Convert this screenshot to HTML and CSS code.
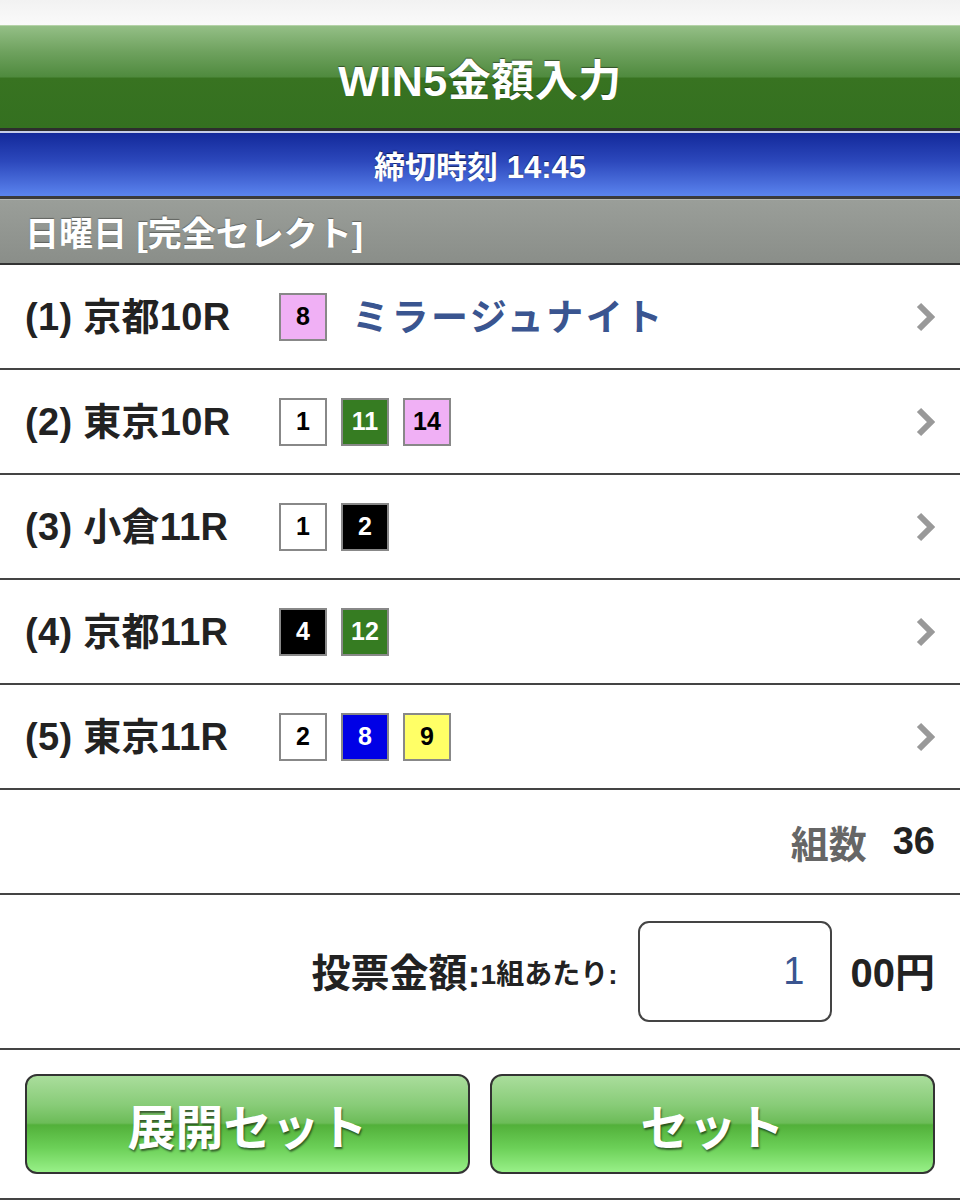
FILE: index.html
```html
<!DOCTYPE html>
<html lang="ja">
<head>
<meta charset="utf-8">
<title>WIN5金額入力</title>
<link rel="stylesheet" href="styles.css">
</head>
<body>
<div class="page">
  <div class="status"></div>
  <header class="title-bar"><h1>WIN5金額入力</h1></header>
  <div class="deadline">締切時刻 14:45</div>
  <div class="section-head">日曜日 [完全セレクト]</div>

  <div class="race">
    <div class="race-label">(1) 京都10R</div>
    <div class="picks">
      <span class="num pink">8</span>
      <span class="horse">ミラージュナイト</span>
    </div>
    <svg class="chev" viewBox="0 0 20 30"><path d="M4 3 L16 15 L4 27" fill="none" stroke="#999" stroke-width="6"/></svg>
  </div>
  <div class="race">
    <div class="race-label">(2) 東京10R</div>
    <div class="picks">
      <span class="num white">1</span>
      <span class="num green">11</span>
      <span class="num pink">14</span>
    </div>
    <svg class="chev" viewBox="0 0 20 30"><path d="M4 3 L16 15 L4 27" fill="none" stroke="#999" stroke-width="6"/></svg>
  </div>
  <div class="race">
    <div class="race-label">(3) 小倉11R</div>
    <div class="picks">
      <span class="num white">1</span>
      <span class="num black">2</span>
    </div>
    <svg class="chev" viewBox="0 0 20 30"><path d="M4 3 L16 15 L4 27" fill="none" stroke="#999" stroke-width="6"/></svg>
  </div>
  <div class="race">
    <div class="race-label">(4) 京都11R</div>
    <div class="picks">
      <span class="num black">4</span>
      <span class="num green">12</span>
    </div>
    <svg class="chev" viewBox="0 0 20 30"><path d="M4 3 L16 15 L4 27" fill="none" stroke="#999" stroke-width="6"/></svg>
  </div>
  <div class="race">
    <div class="race-label">(5) 東京11R</div>
    <div class="picks">
      <span class="num white">2</span>
      <span class="num blue">8</span>
      <span class="num yellow">9</span>
    </div>
    <svg class="chev" viewBox="0 0 20 30"><path d="M4 3 L16 15 L4 27" fill="none" stroke="#999" stroke-width="6"/></svg>
  </div>

  <div class="count-row">
    <span class="count-label">組数</span>
    <span class="count-val">36</span>
  </div>

  <div class="amount-row">
    <span class="amount-label">投票金額:</span><span class="amount-sub">1組あたり:</span>
    <div class="amount-input">1</div>
    <span class="amount-unit">00円</span>
  </div>

  <div class="button-row">
    <button class="btn">展開セット</button>
    <button class="btn">セット</button>
  </div>
</div>
</body>
</html>
```

FILE: styles.css
```css
* { box-sizing: border-box; }
html, body { margin: 0; padding: 0; background: #fff; }
body {
  font-family: "Liberation Sans", "Noto Sans CJK JP", sans-serif;
  font-weight: bold;
  color: #222;
}
.page { width: 960px; height: 1200px; overflow: hidden; }

.status {
  height: 25px;
  background: linear-gradient(#f2f2f2, #fafafa);
}
.title-bar {
  height: 106px;
  display: flex;
  align-items: center;
  justify-content: center;
  background: linear-gradient(#94bf86 0%, #6fa25f 25%, #4f8a3e 50%, #387321 51%, #347020 100%);
  border-top: 1px solid #b5d3a8;
  border-bottom: 3px solid #2d2d2d;
}
.title-bar h1 {
  margin: 0;
  font-size: 43px;
  color: #fff;
  text-shadow: 0 -1px 1px rgba(0,0,0,.45);
  letter-spacing: 0.5px;
}
.deadline {
  height: 68px;
  display: flex;
  align-items: center;
  justify-content: center;
  font-size: 31px;
  color: #fff;
  background: linear-gradient(#13299a 0%, #2c48bc 45%, #4a6edc 80%, #5a84ee 100%);
  border-top: 2px solid #c6cde8;
  border-bottom: 3px solid #3a3a3a;
  text-shadow: 0 -1px 1px rgba(0,0,0,.5);
}
.section-head {
  height: 66px;
  display: flex;
  align-items: center;
  padding-left: 25px;
  font-size: 34px;
  color: #fff;
  background: linear-gradient(#9a9e99, #8a8e89);
  border-top: 1px solid #b4b7b3;
  border-bottom: 2px solid #333;
  text-shadow: 0 -1px 1px rgba(0,0,0,.35);
}

.race {
  height: 105px;
  display: flex;
  align-items: center;
  padding: 0 25px;
  border-bottom: 2px solid #444;
}
.race-label {
  width: 254px;
  font-size: 38px;
  letter-spacing: 0.3px;
  color: #222;
  padding-bottom: 6px;
}
.picks {
  flex: 1;
  display: flex;
  align-items: center;
  gap: 14px;
}
.num {
  width: 48px;
  height: 48px;
  display: flex;
  align-items: center;
  justify-content: center;
  border: 2px solid #888;
  font-size: 25px;
  color: #000;
}
.num.white { background: #fff; }
.num.black { background: #000; color: #fff; }
.num.green { background: #367c22; color: #fff; }
.num.pink { background: #f0b0f5; }
.num.blue { background: #0000e6; color: #fff; }
.num.yellow { background: #ffff66; }
.horse {
  margin-left: 11px;
  font-size: 37px;
  color: #3a5590;
  letter-spacing: 2.5px;
  padding-bottom: 4px;
}
.chev { width: 20px; height: 30px; flex: none; }

.count-row {
  height: 105px;
  display: flex;
  align-items: center;
  justify-content: flex-end;
  padding-right: 25px;
  border-bottom: 2px solid #444;
  font-size: 38px;
}
.count-label { color: #666; margin-right: 26px; }
.count-val { color: #222; }

.amount-row {
  height: 155px;
  display: flex;
  align-items: center;
  justify-content: flex-end;
  padding-right: 25px;
  border-bottom: 2px solid #444;
}
.amount-label { font-size: 39px; color: #222; padding-bottom: 4px; }
.amount-sub { font-size: 28px; color: #222; margin-right: 20px; }
.amount-input {
  width: 194px;
  height: 101px;
  border: 2px solid #444;
  border-radius: 11px;
  display: flex;
  align-items: center;
  justify-content: flex-end;
  padding-right: 25px;
  font-size: 38px;
  font-weight: normal;
  color: #3a5590;
  margin-right: 19px;
}
.amount-unit { font-size: 40px; color: #222; padding-bottom: 4px; }

.button-row {
  height: 150px;
  display: flex;
  align-items: center;
  gap: 20px;
  padding: 0 25px;
  border-bottom: 2px solid #444;
}
.btn {
  flex: 1;
  height: 100px;
  border: 2px solid #333;
  border-radius: 12px;
  background: linear-gradient(#aadd9c 0%, #88cc78 30%, #6cbc58 49%, #52b03a 51%, #6cd058 75%, #98f088 100%);
  font-family: "Liberation Sans", "Noto Sans CJK JP", sans-serif;
  font-weight: bold;
  font-size: 48px;
  color: #fff;
  text-shadow: 1px 2px 2px rgba(0,0,0,.55);
  padding: 0;
}
```
